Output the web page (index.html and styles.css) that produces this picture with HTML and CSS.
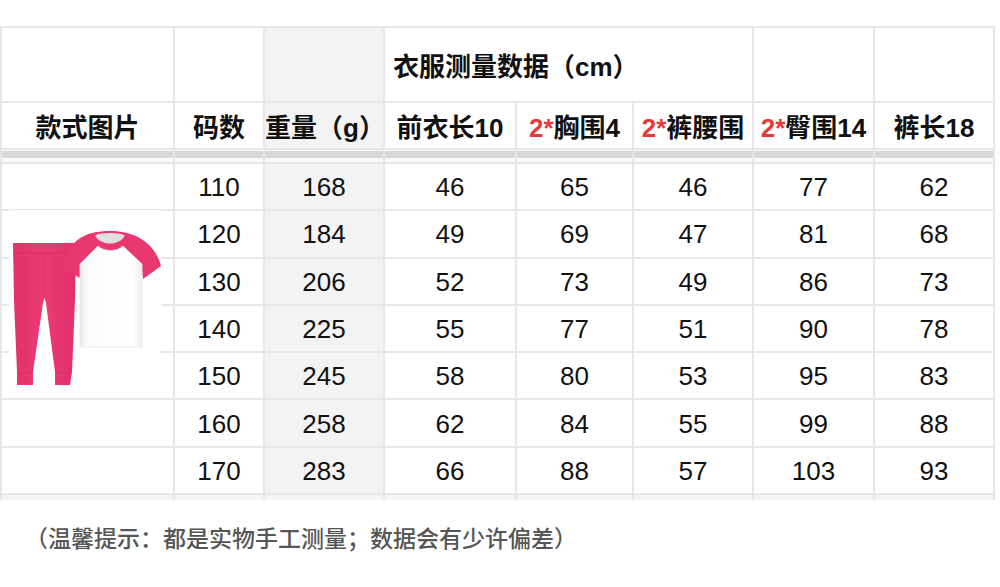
FILE: index.html
```html
<!DOCTYPE html>
<html lang="zh-CN">
<head>
<meta charset="utf-8">
<title>尺码表</title>
<link rel="stylesheet" href="styles.css">
</head>
<body>
<div class="sheet">
  <table class="size-table">
    <colgroup>
      <col class="c-img"><col class="c-size"><col class="c-weight"><col class="c-a"><col class="c-b"><col class="c-c"><col class="c-d"><col class="c-e">
    </colgroup>
    <thead>
      <tr class="head-top">
        <th></th>
        <th></th>
        <th></th>
        <th colspan="3" class="group-title">衣服测量数据（cm）</th>
        <th></th>
        <th></th>
      </tr>
      <tr class="head-main">
        <th>款式图片</th>
        <th>码数</th>
        <th>重量（g）</th>
        <th>前衣长10</th>
        <th><span class="red">2*</span>胸围4</th>
        <th><span class="red">2*</span>裤腰围</th>
        <th><span class="red">2*</span>臀围14</th>
        <th>裤长18</th>
      </tr>
      <tr class="sep">
        <td></td><td></td><td></td><td></td><td></td><td></td><td></td><td></td>
      </tr>
    </thead>
    <tbody>
      <tr><td></td><td>110</td><td>168</td><td>46</td><td>65</td><td>46</td><td>77</td><td>62</td></tr>
      <tr><td></td><td>120</td><td>184</td><td>49</td><td>69</td><td>47</td><td>81</td><td>68</td></tr>
      <tr><td></td><td>130</td><td>206</td><td>52</td><td>73</td><td>49</td><td>86</td><td>73</td></tr>
      <tr><td></td><td>140</td><td>225</td><td>55</td><td>77</td><td>51</td><td>90</td><td>78</td></tr>
      <tr><td></td><td>150</td><td>245</td><td>58</td><td>80</td><td>53</td><td>95</td><td>83</td></tr>
      <tr><td></td><td>160</td><td>258</td><td>62</td><td>84</td><td>55</td><td>99</td><td>88</td></tr>
      <tr><td></td><td>170</td><td>283</td><td>66</td><td>88</td><td>57</td><td>103</td><td>93</td></tr>
      <tr class="cut"><td></td><td></td><td></td><td></td><td></td><td></td><td></td><td></td></tr>
    </tbody>
  </table>

  <svg class="product" viewBox="9 210 152 187" width="152" height="187" aria-label="款式图片">
    <defs>
      <linearGradient id="body" x1="0" y1="0" x2="1" y2="0">
        <stop offset="0" stop-color="#ececf0"/>
        <stop offset="0.12" stop-color="#fbfbfc"/>
        <stop offset="0.85" stop-color="#ffffff"/>
        <stop offset="1" stop-color="#efeff2"/>
      </linearGradient>
      <linearGradient id="pant" x1="0" y1="0" x2="1" y2="0">
        <stop offset="0" stop-color="#e3326a"/>
        <stop offset="0.5" stop-color="#ec3b73"/>
        <stop offset="1" stop-color="#e1306a"/>
      </linearGradient>
    </defs>
    <rect x="9" y="210" width="152" height="187" fill="#ffffff"/>
    <!-- pants -->
    <path d="M13,243 L76,243 L75,300 L72,372 L70,385 L55,385 L55,372 L46,303 L44.5,298 L43,303 L33,372 L33,385 L17,385 L17,372 L14,300 Z" fill="url(#pant)"/>
    <path d="M13,253 L76,253" stroke="#d22c61" stroke-width="0.9"/>
    <path d="M17,373 L33,373 M55,373 L70,373" stroke="#d22c61" stroke-width="0.9"/>
    <path d="M44.5,254 L44.5,298" stroke="#d63068" stroke-width="0.7"/>
    <!-- shirt -->
    <path d="M92,233 C80,236 66,246 60,267 L82,279 L80,270 L80,347 L142,347 L142,270 L143,279 L161,266 C156,246 140,236 127,233 C120,231 100,231 92,233 Z" fill="#e9386f"/>
    <path d="M98,246 L80,264 L80,347 L142,347 L142,264 L123,246 C117,252 104,252 98,246 Z" fill="url(#body)" stroke="#e4e4e9" stroke-width="0.8"/>
    <path d="M94,235 C99,231 121,231 126,235 C122,248 98,248 94,235 Z" fill="#dedee3" stroke="#e9386f" stroke-width="2.2"/>
  </svg>
</div>

<p class="note">（温馨提示：都是实物手工测量；数据会有少许偏差）</p>
</body>
</html>
```

FILE: styles.css
```css
html, body {
  margin: 0;
  padding: 0;
  background: #ffffff;
}

body {
  width: 1000px;
  height: 587px;
  overflow: hidden;
  font-family: "Liberation Sans", "Noto Sans CJK SC", sans-serif;
  color: #111111;
}

.sheet {
  position: relative;
  width: 993px;
  margin: 26px 0 0 0;
}

.size-table {
  width: 993px;
  border-collapse: collapse;
  table-layout: fixed;
  font-size: 26px;
}

.c-img { width: 173px; }
.c-size { width: 90px; }
.c-weight { width: 120px; }
.c-a { width: 132px; }
.c-b { width: 117px; }
.c-c { width: 120px; }
.c-d { width: 121px; }
.c-e { width: 120px; }

.size-table th,
.size-table td {
  border: 2px solid #e6e6ec;
  padding: 0;
  text-align: center;
  vertical-align: middle;
  white-space: nowrap;
  overflow: visible;
}

.size-table th {
  font-weight: 700;
}

.size-table tr > :nth-child(3) {
  background: #f3f3f3;
}

.head-top { height: 75px; }
.head-main { height: 47px; }

.group-title {
  text-align: left !important;
  padding-left: 8px !important;
  background: #ffffff !important;
}

.red { color: #e53a3c; }

.size-table tr.sep { height: 14px; }
.size-table tr.sep td {
  background: linear-gradient(#fafafa 0 1px, #d8d8d8 1px 8px, #fafafa 8px);
  border-top: 0;
}

.size-table tbody tr { height: 47.3px; }
.size-table tbody td {
  font-weight: 400;
  color: #111111;
  padding-top: 2px;
}

.size-table tr.cut { height: 6px; }
.size-table tr.cut td {
  background: #f4f4f6;
  border-bottom: 0;
  padding: 0;
}

.product {
  position: absolute;
  left: 9px;
  top: 184px;
  display: block;
}

.note {
  margin: 17px 0 0 25px;
  font-size: 23px;
  line-height: 40px;
  color: #565656;
  font-weight: 500;
  font-family: "Noto Sans CJK SC", "Liberation Sans", sans-serif;
  white-space: nowrap;
}
```
